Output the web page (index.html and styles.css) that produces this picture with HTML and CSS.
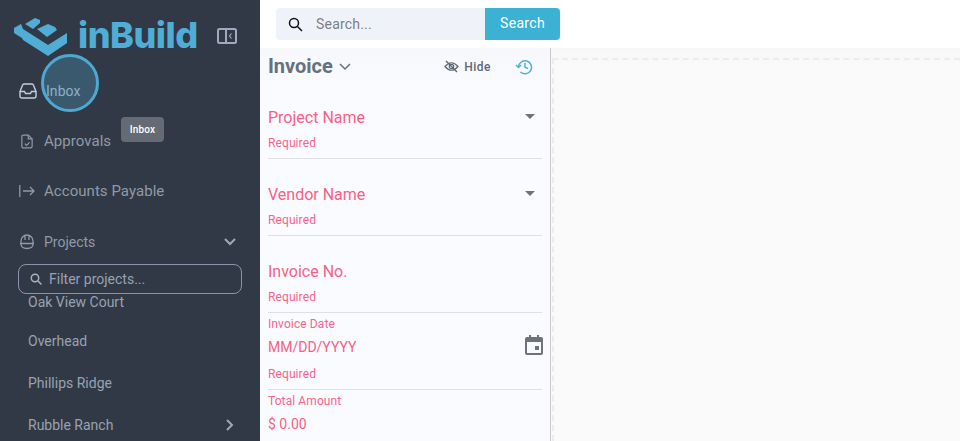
FILE: index.html
```html
<!DOCTYPE html>
<html lang="en">
<head>
<meta charset="utf-8">
<title>inBuild</title>
<link rel="stylesheet" href="styles.css">
</head>
<body>
<div class="app">
  <aside class="sidebar">
    <div class="brand">
      <svg class="logo" width="54" height="38" viewBox="14 18 54 38"><g fill="#4fadd6"><path d="M14 28 21 24 23 29 48 45 67 33V43L48 56 23 40 22 38 14 33Z"/><path d="M25 24 35 18 40 20V23L33 29Z"/><path d="M37 29 48 24 55 27 57 30 47 37Z"/></g></svg>
      <span class="wordmark">inBuild</span>
      <svg class="collapse" width="20" height="16" viewBox="0 0 20 16" fill="none" stroke="#a3a9bd" stroke-width="2"><rect x="1" y="1" width="18" height="14" rx="1.5"/><path d="M9 1v14"/><path d="M14.5 5.5 12.5 8l2 2.5" stroke-width="1.2"/></svg>
    </div>
    <nav class="nav">
      <a class="nav-item active">
        <svg width="18" height="16" viewBox="0 0 18 16" fill="none" stroke="#c5cfdc" stroke-width="1.4"><path d="M1 8.500 3.500 2.200Q3.900 1 5 1h8q1.100 0 1.500 1.200L17 8.500V13q0 2-2 2H3q-2 0-2-2Z"/><path d="M1 8.500h4.500l1 2h5l1-2H17"/></svg>
        <span>Inbox</span>
      </a>
      <a class="nav-item">
        <svg class="doc" width="12" height="15" viewBox="0 0 14 17" fill="none" stroke="#8f99a8" stroke-width="1.400"><path d="M3 1h5.500L13 5.500V14q0 2-2 2H3q-2 0-2-2V3q0-2 2-2Z"/><path d="M8.500 1v4.500H13M4.500 11l2 2 3.500-3.500"/></svg>
        <span>Approvals</span>
      </a>
      <a class="nav-item">
        <svg width="16" height="12" viewBox="0 0 16 12" fill="none" stroke="#8f99a8" stroke-width="1.300"><path d="M.8 0v12M4 6h11M11 2l4 4-4 4"/></svg>
        <span>Accounts Payable</span>
      </a>
      <a class="nav-item projects">
        <svg width="16" height="16" viewBox="0 0 16 16" fill="none" stroke="#8f99a8" stroke-width="1.300"><path d="M2 9V7a6 6 0 0 1 12 0v2M6 1.500V6M10 1.500V6M1 9.500h14M2 10q0 4.500 6 4.500t6-4.500"/></svg>
        <span>Projects</span>
        <svg class="chev" width="12" height="8" viewBox="0 0 12 8" fill="none" stroke="#a0a8b4" stroke-width="2"><path d="M1 1l5 5 5-5"/></svg>
      </a>
    </nav>
    <div class="filter">
      <svg width="12" height="12" viewBox="0 0 12 12" fill="none" stroke="#aab2bf" stroke-width="1.500"><circle cx="5" cy="5" r="3.700"/><path d="M8 8l3.500 3.500"/></svg>
      <span>Filter projects...</span>
    </div>
    <div class="project-list">
      <div class="project clipped">Oak View Court</div>
      <div class="project">Overhead</div>
      <div class="project">Phillips Ridge</div>
      <div class="project">Rubble Ranch
        <svg width="8" height="12" viewBox="0 0 8 12" fill="none" stroke="#a0a8b4" stroke-width="2"><path d="M1 1l5 5-5 5"/></svg>
      </div>
    </div>
    <div class="ripple"></div>
    <div class="tooltip">Inbox</div>
  </aside>
  <main class="main">
    <header class="topbar">
      <div class="search">
        <svg width="15" height="15" viewBox="0 0 15 15" fill="none" stroke="#111" stroke-width="1.500"><circle cx="6" cy="6" r="4.500"/><path d="M9.500 9.500l4.500 4.500"/></svg>
        <span>Search...</span>
      </div>
      <button class="search-btn">Search</button>
    </header>
    <div class="workspace">
      <section class="panel">
        <div class="panel-head">
          <h1>Invoice</h1>
          <svg class="head-chev" width="12" height="8" viewBox="0 0 12 8" fill="none" stroke="#667080" stroke-width="1.500"><path d="M1 1l5 5 5-5"/></svg>
          <span class="hide">
            <svg width="15" height="13" viewBox="0 0 15 13" fill="none" stroke="#5f6875" stroke-width="1.200"><path d="M1 6.500Q7.500-1 14 6.500 7.500 14 1 6.500Z"/><circle cx="7.500" cy="6.500" r="2.200"/><path d="M2 1l11 11" stroke-width="1.400"/></svg>
            Hide
          </span>
          <svg class="history" width="18" height="16" viewBox="0 0 18 16" fill="none" stroke="#4fb0dc" stroke-width="1.500"><path d="M3.500 8a6.500 6.500 0 1 1 2 5"/><path d="M1 6l2.500 2.500L6 6"/><path d="M10 4v4.200l3 1.500"/></svg>
        </div>
        <div class="field tall first">
          <div class="row"><span class="value">Project Name</span><i class="caret"></i></div>
          <div class="help">Required</div>
        </div>
        <div class="field tall">
          <div class="row"><span class="value">Vendor Name</span><i class="caret"></i></div>
          <div class="help">Required</div>
        </div>
        <div class="field tall">
          <div class="row"><span class="value">Invoice No.</span></div>
          <div class="help">Required</div>
        </div>
        <div class="field small">
          <label>Invoice Date</label>
          <div class="row"><span class="value sm">MM/DD/YYYY</span>
            <svg class="cal" width="18" height="20" viewBox="0 0 18 20"><path fill="#6f7278" d="M4 0h2v2h6V0h2v2h2q2 0 2 2v14q0 2-2 2H2q-2 0-2-2V4q0-2 2-2h2Zm-2 7v11h14V7Zm8 4h4v4h-4Z"/></svg>
          </div>
          <div class="help">Required</div>
        </div>
        <div class="field small last">
          <label>Total Amount</label>
          <div class="row"><span class="value sm">$ 0.00</span></div>
        </div>
      </section>
      <section class="canvas"><div class="dash"></div></section>
    </div>
  </main>
</div>
</body>
</html>
```
FILE: styles.css
```css
* { box-sizing: border-box; }
html, body { margin: 0; height: 441px; overflow: hidden; }
body { font-family: Roboto, "Liberation Sans", sans-serif; background: #fff; }
.app { display: flex; width: 960px; height: 441px; }
.sidebar { position: relative; flex: 0 0 260px; background: #323946; display: flex; flex-direction: column; overflow: hidden; }
.brand { display: flex; align-items: flex-start; height: 48px; padding: 18px 0 0 14px; }
.logo { flex: none; }
.wordmark { font-family: Inter, sans-serif; font-weight: 800; font-size: 36px; letter-spacing: -.5px; color: #4fadd6; margin: -3px 0 0 10px; line-height: 40px; width: 119px; white-space: nowrap; }
.collapse { margin: 10px 0 0 20px; flex: none; }
.nav { display: flex; flex-direction: column; padding-top: 18px; }
.nav-item { display: flex; align-items: center; height: 50px; padding-left: 19px; font-size: 15px; color: #8f99a8; letter-spacing: .05px; position: relative; }
.nav-item svg:first-child { flex: none; }
.nav-item .doc { margin-left: 2px; }
.nav-item span { position: absolute; left: 44px; }
.nav-item.active { color: #a3b2c2; }
.nav-item.active span { left: 46px; font-size: 14px; }
.projects { font-size: 14px; height: 52px; letter-spacing: 0; }
.chev { position: absolute; left: 224px; }
.filter { flex: none; margin: -4px 18px 0; height: 30px; border: 1px solid #8995a8; border-radius: 8px; display: flex; align-items: center; gap: 7px; padding-left: 11px; font-size: 14px; color: #98a2b2; letter-spacing: 0; background: #323946; position: relative; z-index: 1; }
.project-list { margin-top: -8px; padding-left: 28px; font-size: 14px; color: #98a2b2; }
.project { height: 42px; display: flex; align-items: center; position: relative; letter-spacing: 0; }
.project svg { position: absolute; left: 198px; }
.clipped { height: 34px; align-items: flex-end; padding-bottom: 10px; }
.ripple { position: absolute; left: 41px; top: 54px; width: 58px; height: 58px; border-radius: 50%; border: 3px solid #4ba9d2; background: rgba(79,173,214,.28); }
.tooltip { position: absolute; left: 121px; top: 117px; width: 43px; height: 25px; border-radius: 4px; background: #656b75; color: #fff; font-size: 10px; font-weight: 500; display: flex; align-items: center; justify-content: center; letter-spacing: .2px; }
.main { flex: 1; display: flex; flex-direction: column; min-width: 0; }
.topbar { flex: 0 0 48px; display: flex; align-items: flex-start; padding: 8px 0 0 16px; background: #fff; }
.search { width: 209px; height: 32px; background: #eff3f9; border-radius: 4px 0 0 4px; display: flex; align-items: center; gap: 13px; padding-left: 12px; color: #7b7f86; font-size: 14px; letter-spacing: .2px; }
.search-btn { width: 75px; height: 32px; border: 0; padding: 0 0 3px; background: #3bb1d3; color: #fff; font: 14px Roboto, sans-serif; letter-spacing: .3px; border-radius: 0 4px 4px 0; }
.workspace { flex: 1; display: flex; min-height: 0; }
.panel { flex: 0 0 291px; background: linear-gradient(#f6f8fb, #fafbff 40px); border-right: 1px solid #c8c8cc; padding: 0 8px; overflow: hidden; }
.panel-head { display: flex; align-items: center; height: 36px; color: #667080; }
.panel-head h1 { margin: 0; font-size: 20px; font-weight: 700; color: #667080; letter-spacing: 0; }
.head-chev { margin-left: 6px; margin-top: 2px; }
.hide { display: flex; align-items: center; gap: 5px; margin-left: auto; font-size: 12px; font-weight: 500; color: #5f6875; letter-spacing: .5px; margin-top: 1px; }
.history { margin: 2px 9px 0 24px; }
.field { border-bottom: 1px solid #dfe0e3; width: 274px; }
.tall { height: 77px; padding-top: 26px; }
.tall.first { height: 75px; padding-top: 24px; }
.row { display: flex; align-items: center; justify-content: space-between; }
.value { font-size: 16px; line-height: 19px; color: #f95f85; letter-spacing: 0; }
.value.sm { font-size: 14px; }
.help { font-size: 12px; line-height: 14px; color: #f8648a; margin-top: 9px; letter-spacing: .1px; }
.caret { width: 0; height: 0; margin-right: 7px; border-left: 5px solid transparent; border-right: 5px solid transparent; border-top: 5px solid #6f7278; margin-top: -3px; }
.small { height: 77px; padding-top: 4px; }
.small label { display: block; font-size: 12px; line-height: 14px; color: #f8648a; letter-spacing: .1px; }
.small .row { height: 26px; margin-top: 3px; }
.small .help { margin-top: 7px; }
.cal { margin: -4px -1px 0 0; flex: none; }
.last { border-bottom: 0; }
.canvas { flex: 1; background: linear-gradient(#f7f7f7, #fafafa 20px); padding: 10px 0 0 1px; }
.dash { border-top: 2px dashed #ececec; border-left: 2px dashed #ececec; height: 100%; }
```
